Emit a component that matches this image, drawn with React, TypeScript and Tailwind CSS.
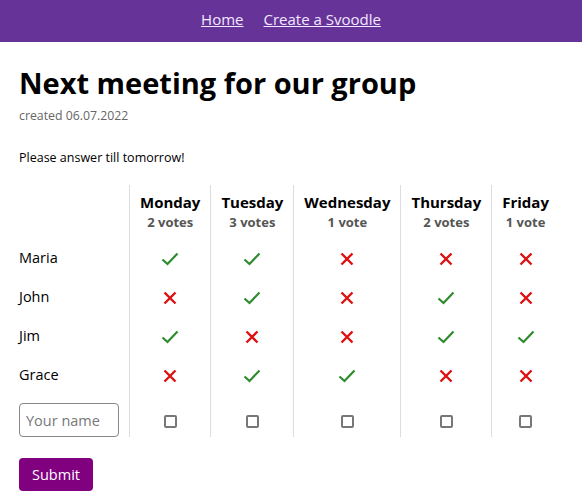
import React from 'react';

type Answer = boolean;

interface Participant {
  name: string;
  answers: Answer[];
}

const days = ['Monday', 'Tuesday', 'Wednesday', 'Thursday', 'Friday'];

const participants: Participant[] = [
  { name: 'Maria', answers: [true, true, false, false, false] },
  { name: 'John', answers: [false, true, false, true, false] },
  { name: 'Jim', answers: [true, false, false, true, true] },
  { name: 'Grace', answers: [false, true, true, false, false] },
];

const Check = () => (
  <svg width="18" height="14" viewBox="0 0 18 14" className="inline-block align-middle">
    <path d="M1.5 7.5 L6.5 12 L16.5 1.5" fill="none" stroke="#2e8b2e" strokeWidth="2.2" />
  </svg>
);

const Cross = () => (
  <svg width="14" height="14" viewBox="0 0 14 14" className="inline-block align-middle">
    <path d="M1.5 1.5 L12.5 12.5 M12.5 1.5 L1.5 12.5" fill="none" stroke="#dd1111" strokeWidth="2.4" />
  </svg>
);

export default function App() {
  const votes = days.map((_, i) => participants.filter(p => p.answers[i]).length);

  return (
    <div className="min-h-[500px] bg-white text-black" style={{ fontFamily: '"Open Sans", "Noto Sans", sans-serif' }}>
      {/* Navbar */}
      <nav className="h-[42px] pb-[4px] bg-[#663399] flex items-center justify-center gap-5 text-[15px] text-[#f3e8ff]">
        <a href="#" className="underline">Home</a>
        <a href="#" className="underline">Create a Svoodle</a>
      </nav>

      <main className="px-[19px]">
        <h1 className="pt-[22px] text-[29px] font-bold leading-[38px]">Next meeting for our group</h1>
        <p className="text-[12.3px] text-[#666] leading-4 mt-[6px]">created 06.07.2022</p>
        <p className="text-[12.5px] leading-4 mt-[26px]">Please answer till tomorrow!</p>

        <table className="mt-[19px] border-collapse">
          <thead>
            <tr className="h-[53px]">
              <th className="w-[110px] pr-[10px]"></th>
              {days.map((d, i) => (
                <th key={d} className="border-l border-[#ddd] px-[10px] text-center align-middle">
                  <div className="text-[15px] font-bold leading-5">{d}</div>
                  <div className="text-[13px] font-bold text-[#555] leading-5">
                    {votes[i]} {votes[i] === 1 ? 'vote' : 'votes'}
                  </div>
                </th>
              ))}
            </tr>
          </thead>
          <tbody>
            {participants.map(p => (
              <tr key={p.name} className="h-[39px]">
                <td className="text-[14.5px] text-left">{p.name}</td>
                {p.answers.map((a, i) => (
                  <td key={i} className="border-l border-[#ddd] text-center align-middle">
                    {a ? <Check /> : <Cross />}
                  </td>
                ))}
              </tr>
            ))}
            <tr>
              <td className="pr-[10px] pt-[9px] align-middle">
                <input
                  type="text"
                  placeholder="Your name"
                  className="block w-[100px] h-[34px] rounded-[4px] border border-[#888] px-[6px] text-[14.5px] placeholder:text-[#777] outline-none"
                />
              </td>
              {days.map(d => (
                <td key={d} className="border-l border-[#ddd] pt-[9px] text-center align-middle">
                  <input
                    type="checkbox"
                    className="appearance-none inline-block align-middle w-[13px] h-[13px] border-2 border-[#777] rounded-[2px] bg-white checked:bg-[#800080]"
                  />
                </td>
              ))}
            </tr>
          </tbody>
        </table>

        <button className="mt-[21px] h-[33px] px-[13px] rounded-[4px] bg-[#800080] text-white text-[14.5px]">
          Submit
        </button>
      </main>
    </div>
  );
}
